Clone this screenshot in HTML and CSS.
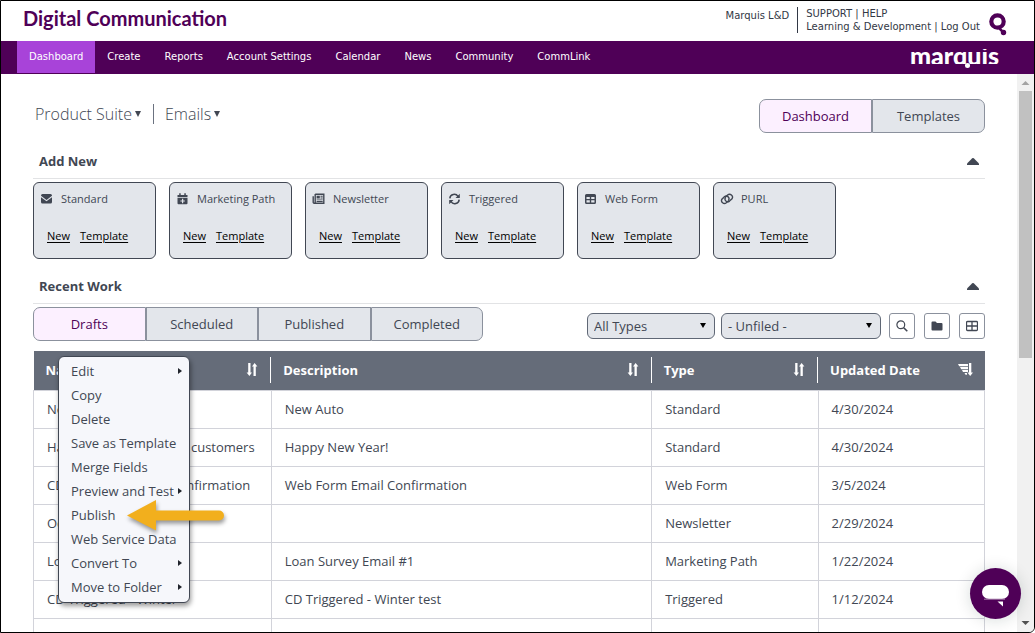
FILE: index.html
```html
<!DOCTYPE html>
<html lang="en">
<head>
<meta charset="utf-8">
<title>Digital Communication</title>
<link rel="stylesheet" href="styles.css">
</head>
<body>
<svg class="sprite" aria-hidden="true">
  <symbol id="sort" viewBox="0 0 12 14"><path d="M2.200 0h2.300v9.500H6L3.400 13 .6 9.500h1.600zM7.500 13V3.500H6L8.600 0l2.800 3.500H9.800V13z" fill="currentColor"/></symbol>
  <symbol id="caret" viewBox="0 0 6 6"><path d="M0 0h6L3 6z" fill="currentColor"/></symbol>
  <symbol id="up" viewBox="0 0 12 7"><path d="M5 .4a1.500 1.500 0 0 1 2 0L12 5.500V7H0V5.500z" fill="currentColor"/></symbol>
</svg>
<div class="app">
  <header class="header">
    <h1 class="title">Digital Communication</h1>
    <span class="org">Marquis L&amp;D</span>
    <div class="account">
      <div><a href="#">SUPPORT</a> | <a href="#">HELP</a></div>
      <div><a href="#">Learning &amp; Development</a> | <a href="#">Log Out</a></div>
    </div>
    <svg class="q-logo" viewBox="0 0 18 23" aria-hidden="true"><circle cx="8.500" cy="8.500" r="6.200" fill="none" stroke="currentColor" stroke-width="4.200"/><path d="m9 14 6 6" stroke="currentColor" stroke-width="2.500"/><circle cx="14.500" cy="19.500" r="2.700" fill="currentColor"/></svg>
  </header>
  <nav class="nav">
    <a class="nav-link active" href="#">Dashboard</a>
    <a class="nav-link" href="#">Create</a>
    <a class="nav-link" href="#">Reports</a>
    <a class="nav-link" href="#">Account Settings</a>
    <a class="nav-link" href="#">Calendar</a>
    <a class="nav-link" href="#">News</a>
    <a class="nav-link" href="#">Community</a>
    <a class="nav-link" href="#">CommLink</a>
    <span class="brand"><span class="brand-text">marquis</span></span>
  </nav>
  <div class="body">
    <main class="content">
      <div class="topbar">
        <button class="crumb" type="button">Product Suite <svg><use href="#caret"/></svg></button>
        <span class="bar"></span>
        <button class="crumb" type="button">Emails <svg><use href="#caret"/></svg></button>
        <div class="segments view">
          <button class="segment on" type="button">Dashboard</button>
          <button class="segment" type="button">Templates</button>
        </div>
      </div>

      <div class="section-head"><h2>Add New</h2><button class="fold" type="button" aria-label="Collapse Add New"><svg><use href="#up"/></svg></button></div>
      <div class="cards">
        <section class="card"><h3><svg viewBox="0 0 14 14"><path d="M2.500 2h8A1.500 1.500 0 0 1 12 3.500v.3L6.500 8 1 3.800v-.3A1.500 1.500 0 0 1 2.500 2zM1 5.200 6.500 9.300 12 5.200V10a1.500 1.500 0 0 1-1.500 1.500h-8A1.500 1.500 0 0 1 1 10z" fill="currentColor"/></svg>Standard</h3><p><a href="#">New</a><a href="#">Template</a></p></section>
        <section class="card"><h3><svg viewBox="0 0 14 14"><path fill-rule="evenodd" d="M3.200 1.200h1.500V3h3.600V1.200h1.500V3h1.700v2H1.500V3h1.700zM1.500 5.800h10v5.400a1 1 0 0 1-1 1h-8a1 1 0 0 1-1-1zM6 6.800v1.600H4.400v1.200H6v1.600h1.200V9.600h1.600V8.400H7.200V6.800z" fill="currentColor"/></svg>Marketing Path</h3><p><a href="#">New</a><a href="#">Template</a></p></section>
        <section class="card"><h3><svg viewBox="0 0 14 14"><path d="M3.200 2.200h8.600v9H2.200c-.8 0-1-.5-1-1V4.200M3.200 2v8.500" fill="none" stroke="currentColor" stroke-width="1.400"/><path d="M4.600 3.800h3.200v2.600H4.600zM8.500 3.800h2.200v.9H8.500zm0 1.800h2.200v.9H8.500zM4.600 7.400h6.100v.9H4.600zm0 1.700h6.100v1H4.600z" fill="currentColor"/></svg>Newsletter</h3><p><a href="#">New</a><a href="#">Template</a></p></section>
        <section class="card"><h3><svg viewBox="0 0 14 14"><path d="M1.800 6.300a4.500 4.500 0 0 1 8.200-2l1 1M11.200 7.700a4.500 4.500 0 0 1-8.200 2l-1-1" fill="none" stroke="currentColor" stroke-width="1.500"/><path d="M11.800 1.800v4.300H7.500zM1.200 12.200V7.900h4.300z" fill="currentColor"/></svg>Triggered</h3><p><a href="#">New</a><a href="#">Template</a></p></section>
        <section class="card"><h3><svg viewBox="0 0 14 14"><path fill-rule="evenodd" d="M2.500 2h8A1.500 1.500 0 0 1 12 3.500v7a1.500 1.500 0 0 1-1.500 1.500h-8A1.500 1.500 0 0 1 1 10.500v-7A1.500 1.500 0 0 1 2.500 2zm0 3v1.900h3.300V5zm4.700 0v1.900h3.300V5zM2.500 8.200v2.200h3.300V8.200zm4.700 0v2.200h3.300V8.200z" fill="currentColor"/></svg>Web Form</h3><p><a href="#">New</a><a href="#">Template</a></p></section>
        <section class="card"><h3><svg viewBox="0 0 14 14"><g fill="none" stroke="currentColor" stroke-width="1.400" stroke-linecap="round"><path d="M8 9.300 6.300 10.800a2.900 2.900 0 0 1-4.400-3.600l2.500-2.400a2.700 2.700 0 0 1 4.200 3.300"/><path d="m5.800 4.700 1.800-1.600A2.900 2.900 0 0 1 12 6.800L9.500 9.100a2.700 2.700 0 0 1-4.200-3.200"/></g></svg>PURL</h3><p><a href="#">New</a><a href="#">Template</a></p></section>
      </div>

      <div class="section-head recent"><h2>Recent Work</h2><button class="fold" type="button" aria-label="Collapse Recent Work"><svg><use href="#up"/></svg></button></div>
      <div class="work-bar">
        <div class="segments">
          <button class="segment on" type="button">Drafts</button>
          <button class="segment" type="button">Scheduled</button>
          <button class="segment" type="button">Published</button>
          <button class="segment" type="button">Completed</button>
        </div>
        <div class="filters">
          <span class="select types"><select aria-label="Type"><option>All Types</option></select></span>
          <span class="select folders"><select aria-label="Folder"><option>- Unfiled -</option></select></span>
        </div>
        <div class="tools">
          <button class="tool" type="button" aria-label="Search"><svg viewBox="0 0 12 12"><circle cx="4.800" cy="4.800" r="3.900" fill="none" stroke="currentColor" stroke-width="1.200"/><path d="m7.700 7.700 3.600 3.600" stroke="currentColor" stroke-width="1.600"/></svg></button>
          <button class="tool" type="button" aria-label="Folders"><svg viewBox="0 0 12 12"><path d="M.5 2.500a1 1 0 0 1 1-1h3L6 3h4.500a1 1 0 0 1 1 1v5.500a1 1 0 0 1-1 1h-9a1 1 0 0 1-1-1z" fill="currentColor"/></svg></button>
          <button class="tool" type="button" aria-label="Grid view"><svg viewBox="0 0 12 12"><path d="M1.500 1.500h9a1 1 0 0 1 1 1v7a1 1 0 0 1-1 1h-9a1 1 0 0 1-1-1v-7a1 1 0 0 1 1-1zM6 1.500v9M.5 6h11" fill="none" stroke="currentColor" stroke-width="1.300"/></svg></button>
        </div>
      </div>

      <div class="table-wrap">
        <table class="table">
          <colgroup><col class="c-name"><col class="c-desc"><col class="c-type"><col class="c-date"></colgroup>
          <thead><tr>
            <th><span class="th">Name<svg><use href="#sort"/></svg></span></th>
            <th><span class="th">Description<svg><use href="#sort"/></svg></span></th>
            <th><span class="th">Type<svg><use href="#sort"/></svg></span></th>
            <th><span class="th">Updated Date<svg class="wide" viewBox="0 0 15 14"><path d="M0 1h10v2.200H1.200zM2 4h8v2.200H3.200zM4 7h6v2H5zM6.500 10H9v1.800H7.500zM11 0h2.300v9.500H15L12.200 13 9.400 9.500H11z" fill="currentColor"/></svg></span></th>
          </tr></thead>
          <tbody>
            <tr><td>New Auto</td><td>New Auto</td><td>Standard</td><td>4/30/2024</td></tr>
            <tr><td>Happy New Year to our customers</td><td>Happy New Year!</td><td>Standard</td><td>4/30/2024</td></tr>
            <tr><td>CD Web Form Email Confirmation</td><td>Web Form Email Confirmation</td><td>Web Form</td><td>3/5/2024</td></tr>
            <tr><td>October News</td><td></td><td>Newsletter</td><td>2/29/2024</td></tr>
            <tr><td>Loan Survey</td><td>Loan Survey Email #1</td><td>Marketing Path</td><td>1/22/2024</td></tr>
            <tr><td>CD Triggered - Winter</td><td>CD Triggered - Winter test</td><td>Triggered</td><td>1/12/2024</td></tr>
            <tr><td></td><td></td><td></td><td></td></tr>
          </tbody>
        </table>
        <div class="menu" role="menu">
          <button class="item more" type="button" role="menuitem">Edit</button>
          <button class="item" type="button" role="menuitem">Copy</button>
          <button class="item" type="button" role="menuitem">Delete</button>
          <button class="item" type="button" role="menuitem">Save as Template</button>
          <button class="item" type="button" role="menuitem">Merge Fields</button>
          <button class="item more" type="button" role="menuitem">Preview and Test</button>
          <button class="item" type="button" role="menuitem">Publish</button>
          <button class="item" type="button" role="menuitem">Web Service Data</button>
          <button class="item more" type="button" role="menuitem">Convert To</button>
          <button class="item more" type="button" role="menuitem">Move to Folder</button>
        </div>
        <svg class="pointer" viewBox="0 0 98 32" aria-hidden="true"><path d="M0 15.500 29 0v10.500h63a5 5 0 0 1 0 10H29V30.500z" fill="#f2af1d"/></svg>
      </div>
    </main>
    <div class="scrollbar" aria-hidden="true">
      <svg viewBox="0 0 17 17"><path d="m4.500 11 4-4 4 4z" fill="#a3a3a3"/></svg>
      <div class="track"><div class="thumb"></div></div>
      <svg viewBox="0 0 17 17"><path d="m4.500 6 4 4 4-4z" fill="#505050"/></svg>
    </div>
  </div>
  <button class="chat" type="button" aria-label="Chat"><svg viewBox="0 0 51 51"><rect x="12" y="17" width="27" height="14" rx="7" fill="#fff"/><path d="M27.500 33.500h5.500v5z" fill="#fff"/><path d="M14 31.200h21" stroke="#a77fac" stroke-width="1"/></svg></button>
</div>
</body>
</html>
```
FILE: styles.css
```css
* { box-sizing: border-box; }
body { margin: 0; font: 13px/20px "Open Sans", sans-serif; color: #414753; }
button, select { font: inherit; color: inherit; }
button { margin: 0; padding: 0; border: 0; background: none; }
h1, h2, h3, p { margin: 0; }
svg { display: block; flex: none; }
.sprite { position: absolute; width: 0; height: 0; }

.app {
  position: relative;
  display: flex;
  flex-direction: column;
  height: 100vh;
  overflow: hidden;
  border: 1px solid #000;
  border-bottom-right-radius: 6px;
  background: #fff;
}

.header {
  display: flex;
  align-items: flex-start;
  height: 40px;
  padding: 6px 27px 0 22px;
  font: 10px/13px "DejaVu Sans", sans-serif;
  color: #323845;
}
.header a { color: inherit; text-decoration: none; }
.title { margin-right: auto; font: 700 20px/22px Lato, sans-serif; color: #4f0057; }
.org { padding: 2px 8px 0 0; }
.account { padding-left: 8px; border-left: 1px solid #323845; }
.q-logo { width: 18px; height: 23px; margin: 6px 0 0 9px; color: #4f0057; }

.nav {
  display: flex;
  height: 33px;
  padding: 0 35px 0 16px;
  background: #4f0057;
  font: 10px/31px "DejaVu Sans", sans-serif;
}
.nav-link { height: 32px; padding: 0 12px; color: #fff; text-decoration: none; }
.nav-link.active { background: #a843d9; }
.brand { position: relative; margin-left: auto; }
.brand-text {
  display: block;
  font: 900 25px/28px Lato, sans-serif;
  color: #fff;
  clip-path: inset(8px 0 5px 0);
}
.brand::after {
  content: "";
  position: absolute;
  left: 55px;
  bottom: 6px;
  width: 5px;
  height: 5px;
  border-radius: 50%;
  background: #fff;
}

.body { display: flex; flex: 1; min-height: 0; }
.content { flex: 1; min-width: 0; padding: 25px 32px 0 32px; overflow: hidden; }

.topbar { display: flex; align-items: flex-start; margin-bottom: 11px; }
.crumb {
  display: flex;
  align-items: center;
  gap: 3px;
  margin-left: 2px;
  font-size: 16px;
  font-weight: 300;
  line-height: 30px;
}
.crumb svg { width: 6px; height: 6px; }
.bar { width: 1px; height: 20px; margin: 5px 9px 0 12px; background: #6b7280; }
.segments { display: flex; width: 450px; }
.segments.view { width: 226px; margin-left: auto; }
.segment {
  flex: 1;
  height: 34px;
  border: 1px solid #8b919d;
  background: #e3e6eb;
}
.segment:first-child { border-radius: 7px 0 0 7px; }
.segment:last-child { border-radius: 0 7px 7px 0; }
.segment.on { background: #fcf0ff; color: #4f0057; }

.section-head {
  display: flex;
  justify-content: space-between;
  align-items: center;
  height: 35px;
  padding: 0 6px;
  border-bottom: 1px solid #e2e3e5;
}
.section-head.recent { margin-top: 10px; }
.section-head h2 { font-size: 13px; font-weight: 700; }
.fold svg { width: 12px; height: 7px; }

.cards { display: flex; gap: 13px; margin-top: 3px; }
.card {
  width: 123px;
  padding: 6px 6px 12px;
  border: 1px solid #414753;
  border-radius: 6px;
  background: #e3e6eb;
  font-size: 11px;
}
.card h3 { display: flex; align-items: center; gap: 7px; font-size: 11px; font-weight: 400; line-height: 19px; }
.card svg { width: 14px; height: 14px; }
.card p { display: flex; gap: 10px; padding: 18px 0 0 7px; }
.card a { color: #000; text-underline-offset: 2px; }

.work-bar { display: flex; align-items: center; margin: 3px 0 10px; }
.filters, .tools { display: flex; padding-top: 4px; }
.filters { gap: 6px; margin-left: auto; }
.select { position: relative; display: flex; }
.select::after {
  content: "";
  position: absolute;
  right: 9px;
  top: 10px;
  border: 3px solid transparent;
  border-top: 5px solid #000;
  border-bottom: 0;
}
.select select {
  width: 100%;
  height: 26px;
  padding: 0 6px;
  appearance: none;
  border: 1px solid #5f6775;
  border-radius: 6px;
  background: #e3e6eb;
}
.types { width: 128px; }
.folders { width: 160px; }
.tools { gap: 9px; margin-left: 8px; }
.tool {
  display: grid;
  place-items: center;
  width: 26px;
  height: 26px;
  border: 1px solid #8b919d;
  border-radius: 3px;
}
.tool svg { width: 12px; height: 12px; }

.table-wrap { position: relative; }
.table { width: 100%; table-layout: fixed; border-collapse: collapse; }
.c-name { width: 25%; }
.c-desc { width: 40%; }
.c-type { width: 17.500%; }
.c-date { width: 17.500%; }
.table th {
  height: 39px;
  padding: 0;
  background: #656c79;
  color: #fff;
  font-size: 13px;
  text-align: left;
}
.th {
  display: flex;
  justify-content: space-between;
  align-items: center;
  height: 26px;
  padding: 0 12px;
  border-right: 1px solid #fff;
}
.th svg { width: 12px; height: 14px; }
.th svg.wide { width: 15px; }
th:last-child .th { border-right: 0; }
.table td { height: 38px; padding: 0 13px; border: 1px solid #d2d3da; white-space: nowrap; }

.menu {
  position: absolute;
  left: 25px;
  top: 5px;
  width: 132px;
  padding: 2px 0 3px;
  border: 1px solid #414753;
  border-radius: 6px;
  background: #f6f7fb;
  box-shadow: 1px 3px 5px rgba(0, 0, 0, .4);
}
.item {
  display: flex;
  justify-content: space-between;
  align-items: center;
  width: 100%;
  padding: 0 7px 0 12px;
  line-height: 24px;
  white-space: nowrap;
}
.item.more::after { content: ""; border: 3px solid transparent; border-left: 4px solid #20242c; border-right: 0; }
.pointer {
  position: absolute;
  left: 94px;
  top: 149px;
  width: 98px;
  height: 32px;
  filter: drop-shadow(1px 3px 2px rgba(0, 0, 0, .4));
}

.scrollbar { display: flex; flex-direction: column; width: 17px; background: #f1f1f1; }
.scrollbar svg { width: 17px; height: 17px; }
.track { flex: 1; padding: 0 2px; }
.thumb { height: 51%; background: #c1c1c1; }

.chat {
  position: absolute;
  right: 13px;
  bottom: 13px;
  width: 51px;
  height: 51px;
  border-radius: 50%;
  background: #4f0057;
  box-shadow: 0 1px 16px rgba(0, 40, 30, .16);
}
```
